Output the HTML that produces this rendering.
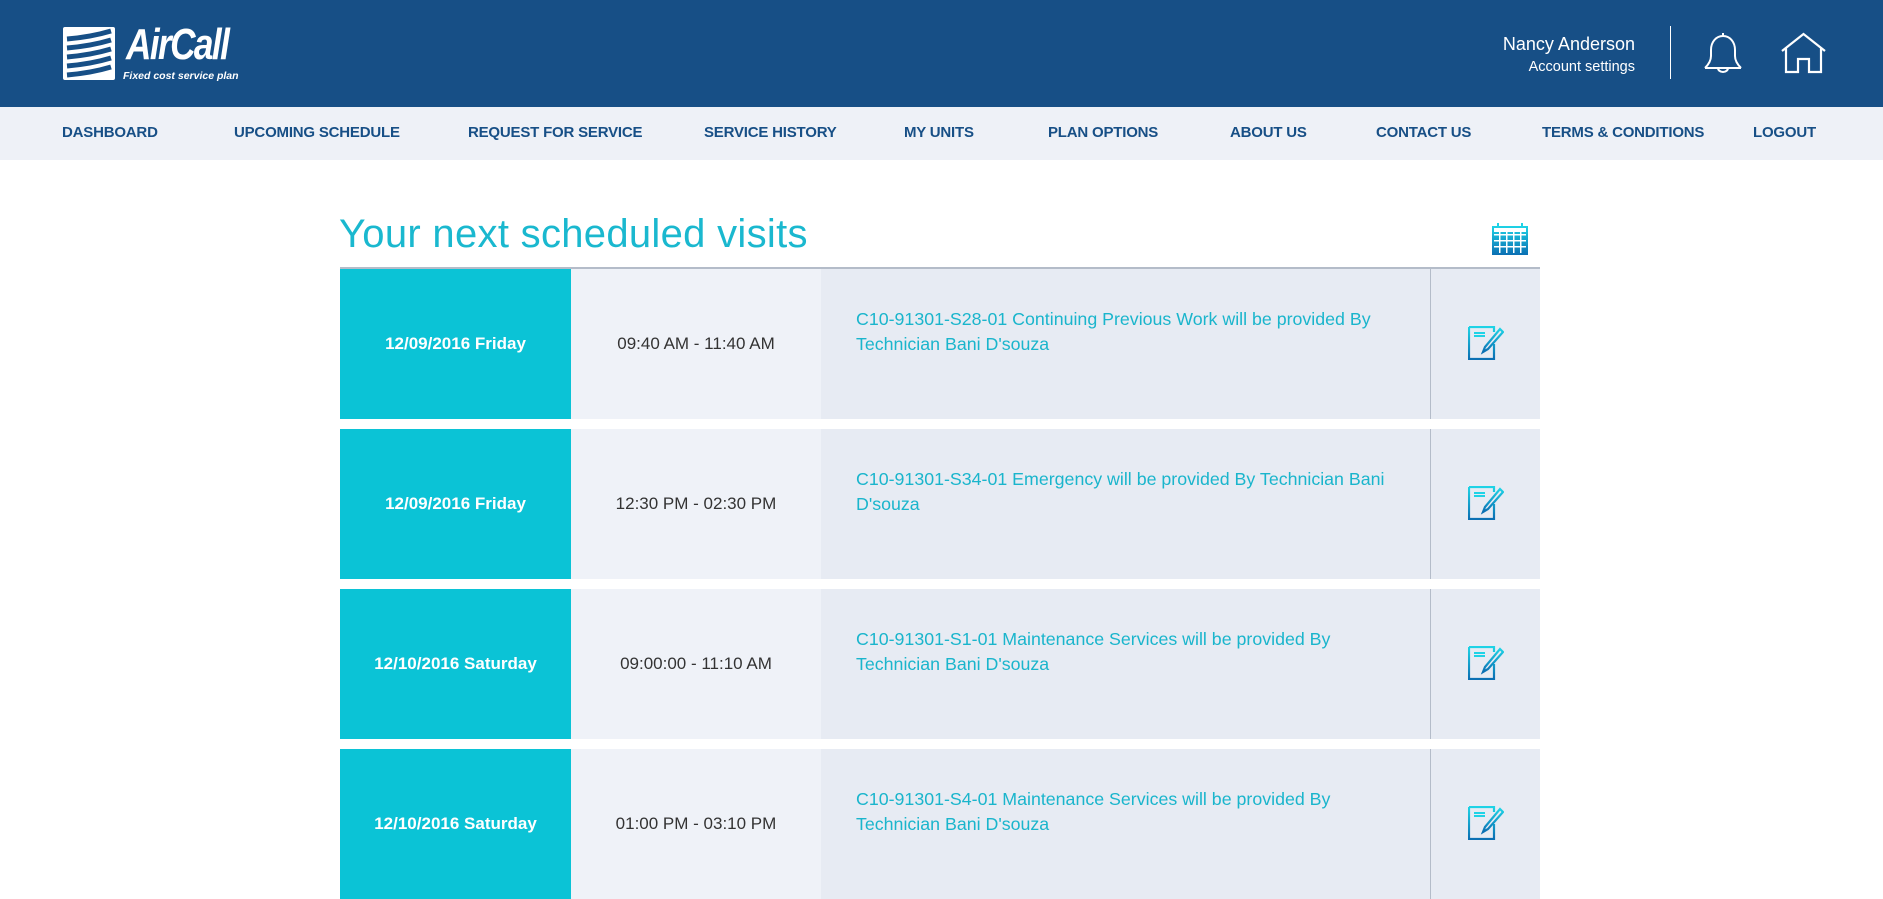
<!DOCTYPE html>
<html><head><meta charset="utf-8"><style>
*{margin:0;padding:0;box-sizing:border-box}
body{width:1883px;height:892px;overflow:hidden;background:#fff;font-family:"Liberation Sans",sans-serif;position:relative}
.hdr{position:absolute;left:0;top:0;width:1883px;height:107px;background:#174f86}
.nav{position:absolute;left:0;top:107px;width:1883px;height:53px;background:#eef1f7}
.nav span{position:absolute;top:17px;font-size:15px;font-weight:bold;color:#174f86;letter-spacing:-0.2px}
.title{position:absolute;left:339px;top:212px;font-size:40px;color:#1ab8cf;font-weight:normal;letter-spacing:0.3px}
.line{position:absolute;left:340px;top:267px;width:1200px;height:2px;background:#b4bcc9}
.row{position:absolute;left:340px;width:1200px;height:150px}
.d{position:absolute;left:0;top:0;width:231px;height:100%;background:#0bc3d6;color:#fff;font-weight:bold;font-size:17px;display:flex;align-items:center;justify-content:center}
.t{position:absolute;left:231px;top:0;width:250px;height:100%;background:#eff2f8;color:#333;font-size:17px;display:flex;align-items:center;justify-content:center}
.x{position:absolute;left:481px;top:0;width:609px;height:100%;background:#e7ebf3;color:#1ab5cc;font-size:17.8px;line-height:25px;padding:38px 20px 0 35px}
.e{position:absolute;left:1090px;top:0;width:110px;height:100%;background:#e7ebf3;border-left:1px solid #b4bcc9}
.e svg{position:absolute;left:37px;top:57px}
</style></head><body>
<div class="hdr">
 <svg style="position:absolute;left:63px;top:27px" width="52" height="53" viewBox="0 0 52 53">
  <rect x="0" y="0" width="52" height="53" rx="2" fill="#fff"/>
  <g stroke="#174f86" stroke-width="5" fill="none">
   <path d="M4 12 Q28 10 48 4"/><path d="M4 21 Q28 19 48 13"/><path d="M4 30 Q28 28 48 22"/><path d="M4 39 Q28 37 48 31"/><path d="M4 48 Q28 46 48 40"/>
  </g>
 </svg>
 <div style="position:absolute;left:126px;top:20px;color:#fff;font-size:44px;font-weight:bold;font-style:italic;letter-spacing:-2px;transform:scaleX(0.8);transform-origin:left">AirCall</div>
 <div style="position:absolute;left:123px;top:70px;color:#fff;font-size:10.5px;font-weight:bold;font-style:italic">Fixed cost service plan</div>
 <div style="position:absolute;right:248px;top:34px;color:#fff;font-size:18px;text-align:right;line-height:21px">Nancy Anderson<br><span style="font-size:14.5px">Account settings</span></div>
 <div style="position:absolute;left:1670px;top:26px;width:1px;height:53px;background:#fff"></div>
 <svg style="position:absolute;left:1702px;top:32px" width="42" height="42" viewBox="0 0 42 42" fill="none" stroke="#fff" stroke-width="2">
  <path d="M21 1v3M3 36h36M3 36c3-3 6-7 6-12V18c0-8 5-14 12-14s12 6 12 14v6c0 5 3 9 6 12M16 36a5 4 0 0 0 10 0"/>
 </svg>
 <svg style="position:absolute;left:1781px;top:32px" width="45" height="42" viewBox="0 0 45 42" fill="none" stroke="#fff" stroke-width="2.2">
  <path d="M1 19L22.5 2 44 19M5 16v24h12V27h11v13h12V16"/>
 </svg>
</div>
<div class="nav">
 <span style="left:62px">DASHBOARD</span><span style="left:234px">UPCOMING SCHEDULE</span><span style="left:468px">REQUEST FOR SERVICE</span><span style="left:704px">SERVICE HISTORY</span><span style="left:904px">MY UNITS</span><span style="left:1048px">PLAN OPTIONS</span><span style="left:1230px">ABOUT US</span><span style="left:1376px">CONTACT US</span><span style="left:1542px">TERMS &amp; CONDITIONS</span><span style="left:1753px">LOGOUT</span>
</div>
<div class="title">Your next scheduled visits</div>
<svg style="position:absolute;left:1492px;top:223px" width="36" height="32" viewBox="0 0 36 32">
 <defs><linearGradient id="g" x1="0" y1="0" x2="0" y2="1"><stop offset="0" stop-color="#1fd3e6"/><stop offset="1" stop-color="#0b6fb3"/></linearGradient></defs>
 <rect x="0" y="3" width="36" height="29" fill="url(#g)"/>
 <rect x="2" y="5" width="32" height="4" fill="#fff"/>
 <rect x="5" y="0" width="2" height="5" fill="#1fd3e6"/><rect x="29" y="0" width="2" height="5" fill="#1fd3e6"/>
 <g fill="#fff"><rect x="2" y="11" width="32" height="1.5"/><rect x="2" y="17" width="32" height="1.5"/><rect x="2" y="23" width="32" height="1.5"/><rect x="7" y="9" width="1.5" height="21"/><rect x="14" y="9" width="1.5" height="21"/><rect x="21" y="9" width="1.5" height="21"/><rect x="28" y="9" width="1.5" height="21"/></g>
</svg>
<div class="line"></div>
<svg width="0" height="0" style="position:absolute"><defs><linearGradient id="g2" x1="0" y1="0" x2="0" y2="1"><stop offset="0" stop-color="#1fd3e6"/><stop offset="1" stop-color="#0b6fb3"/></linearGradient></defs></svg>

<div class="row" style="top:269px"><div class="d">12/09/2016 Friday</div><div class="t">09:40 AM - 11:40 AM</div><div class="x">C10-91301-S28-01 Continuing Previous Work will be provided By Technician Bani D'souza</div><div class="e"><svg width="36" height="34" viewBox="0 0 36 34" fill="none" stroke="url(#g2)" stroke-width="2.2"><path d="M1 1h25v5M26 18v15H1V1"/><path d="M6 7h11M6 10h11" stroke="#1fd3e6" stroke-width="2"/><path d="M32 3l3 3-15 17-5 3 2-5z"/></svg></div></div>
<div class="row" style="top:429px"><div class="d">12/09/2016 Friday</div><div class="t">12:30 PM - 02:30 PM</div><div class="x">C10-91301-S34-01 Emergency will be provided By Technician Bani D'souza</div><div class="e"><svg width="36" height="34" viewBox="0 0 36 34" fill="none" stroke="url(#g2)" stroke-width="2.2"><path d="M1 1h25v5M26 18v15H1V1"/><path d="M6 7h11M6 10h11" stroke="#1fd3e6" stroke-width="2"/><path d="M32 3l3 3-15 17-5 3 2-5z"/></svg></div></div>
<div class="row" style="top:589px"><div class="d">12/10/2016 Saturday</div><div class="t">09:00:00 - 11:10 AM</div><div class="x">C10-91301-S1-01 Maintenance Services will be provided By<br>Technician Bani D'souza</div><div class="e"><svg width="36" height="34" viewBox="0 0 36 34" fill="none" stroke="url(#g2)" stroke-width="2.2"><path d="M1 1h25v5M26 18v15H1V1"/><path d="M6 7h11M6 10h11" stroke="#1fd3e6" stroke-width="2"/><path d="M32 3l3 3-15 17-5 3 2-5z"/></svg></div></div>
<div class="row" style="top:749px"><div class="d">12/10/2016 Saturday</div><div class="t">01:00 PM - 03:10 PM</div><div class="x">C10-91301-S4-01 Maintenance Services will be provided By<br>Technician Bani D'souza</div><div class="e"><svg width="36" height="34" viewBox="0 0 36 34" fill="none" stroke="url(#g2)" stroke-width="2.2"><path d="M1 1h25v5M26 18v15H1V1"/><path d="M6 7h11M6 10h11" stroke="#1fd3e6" stroke-width="2"/><path d="M32 3l3 3-15 17-5 3 2-5z"/></svg></div></div>
</body></html>
